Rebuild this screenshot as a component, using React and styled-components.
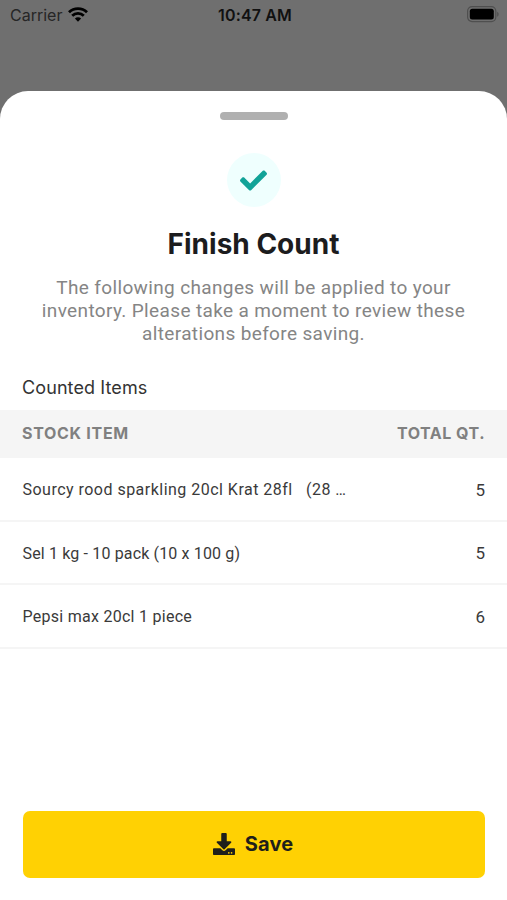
import React from "react";
import styled, { createGlobalStyle } from "styled-components";
import { FaCheck, FaDownload } from "react-icons/fa";

const items = [
  { name: "Sourcy rood sparkling 20cl Krat 28fl\u00a0\u00a0\u00a0(28 …", qty: 5, spacing: 0.48 },
  { name: "Sel 1 kg - 10 pack (10 x 100 g)", qty: 5, spacing: 0.15 },
  { name: "Pepsi max 20cl 1 piece", qty: 6, spacing: 0.27 },
];

const App = () => {
  return (
    <>
      <GlobalStyle />
      <Screen>
        <StatusBar>
          <Carrier>
            <span>Carrier</span>
            <WifiIcon />
          </Carrier>
          <Time>10:47 AM</Time>
          <BatteryIcon />
        </StatusBar>

        <Sheet>
          <Handle />
          <CheckCircle><FaCheck size={27} /></CheckCircle>
          <Title>Finish Count</Title>
          <Description>
            <span>The following changes will be applied to your</span>
            <span>inventory. Please take a moment to review these</span>
            <span>alterations before saving.</span>
          </Description>

          <SectionLabel>Counted Items</SectionLabel>
          <TableHeader>
            <HeaderCell $spacing={0.7}>STOCK ITEM</HeaderCell>
            <HeaderCell $spacing={0.5}>TOTAL QT.</HeaderCell>
          </TableHeader>
          {items.map((item) => (
            <Row key={item.name}>
              <ItemName $spacing={item.spacing}>{item.name}</ItemName>
              <Quantity>{item.qty}</Quantity>
            </Row>
          ))}

          <SaveButton><FaDownload size={22} /> Save</SaveButton>
        </Sheet>
      </Screen>
    </>
  );
};

const WifiIcon = () => (
  <svg width="20" height="15" viewBox="0 0 20 15" fill="none" stroke="#000" strokeWidth="2.8">
    <path d="M1 5.3a12.8 12.8 0 0 1 18 0" />
    <path d="M4.2 8.7a8.3 8.3 0 0 1 11.6 0" />
    <path d="M10 14.8 6.9 11.6a4.4 4.4 0 0 1 6.2 0Z" fill="#000" stroke="none" />
  </svg>
);

const BatteryIcon = () => (
  <svg width="33" height="17" viewBox="0 0 33 17">
    <rect x="0.6" y="0.6" width="28.2" height="15" rx="4.5" fill="none" stroke="#4f4f4f" strokeWidth="1.2" />
    <rect x="2.8" y="2.8" width="24" height="10.6" rx="2.5" fill="#000" />
    <path d="M30.2 5.7c1.9.7 1.9 4.3 0 5Z" fill="#4f4f4f" />
  </svg>
);

export default App;

// Styled Components
const GlobalStyle = createGlobalStyle`
  * {
    box-sizing: border-box;
  }

  body {
    margin: 0;
    background: #6f6f6f;
    font-family: Roboto, "Liberation Sans", sans-serif;
  }
`;

const Screen = styled.div`
  height: 900px;
  display: flex;
  flex-direction: column;
  background: #6f6f6f;
  overflow: hidden;
`;

const StatusBar = styled.header`
  height: 91px;
  flex-shrink: 0;
  padding: 6px 7px 0 10px;
  display: grid;
  grid-template-columns: 1fr auto 1fr;
  align-items: start;
  color: #111;
  font-family: Inter, sans-serif;
  font-size: 16px;
  line-height: 18px;

  > svg {
    justify-self: end;
  }
`;

const Carrier = styled.div`
  display: flex;
  align-items: center;
  gap: 6px;
  color: #262626;

  svg {
    margin-bottom: 2px;
  }
`;

const Time = styled.div`
  font-weight: 600;
  letter-spacing: 0.15px;
`;

const Sheet = styled.main`
  flex: 1;
  display: flex;
  flex-direction: column;
  align-items: center;
  background: #fff;
  border-radius: 28px 28px 0 0;
`;

const Handle = styled.div`
  width: 68px;
  height: 8px;
  margin-top: 21px;
  border-radius: 4px;
  background: #b0b0b0;
`;

const CheckCircle = styled.div`
  width: 54px;
  height: 54px;
  margin-top: 33px;
  display: flex;
  align-items: center;
  justify-content: center;
  border-radius: 50%;
  background: #effffe;
  color: #12a398;
`;

const Title = styled.h1`
  margin: 19px 0 0;
  color: #1c1c1e;
  font-family: Inter, sans-serif;
  font-size: 28px;
  font-weight: 700;
  line-height: 36px;
`;

const Description = styled.p`
  margin: 14px 0 0;
  display: flex;
  flex-direction: column;
  align-items: center;
  color: #858585;
  font-size: 19px;
  line-height: 23px;
  letter-spacing: 0.36px;
`;

const SectionLabel = styled.h2`
  align-self: stretch;
  margin: 31px 0 0;
  padding-left: 22px;
  color: #333;
  font-family: Inter, sans-serif;
  font-size: 18px;
  font-weight: 400;
  line-height: 24px;
  letter-spacing: 0.1px;
`;

const TableHeader = styled.div`
  align-self: stretch;
  height: 48px;
  margin-top: 10px;
  padding: 0 22px 2px;
  display: flex;
  align-items: center;
  justify-content: space-between;
  background: #f5f5f5;
  color: #808080;
  font-family: Inter, sans-serif;
  font-size: 16px;
  font-weight: 700;
`;

const HeaderCell = styled.span`
  letter-spacing: ${(props) => props.$spacing}px;
`;

const Row = styled.div`
  align-self: stretch;
  height: 63.5px;
  padding: 2px 22px 0;
  display: flex;
  align-items: center;
  justify-content: space-between;
  border-bottom: 2px solid #f5f5f5;
  color: #3a3a3a;
  font-size: 16px;
`;

const ItemName = styled.span`
  padding-left: 0.5px;
  letter-spacing: ${(props) => props.$spacing}px;
`;

const Quantity = styled.span`
  font-size: 17px;
`;

const SaveButton = styled.button`
  width: 462px;
  height: 67px;
  margin-top: auto;
  margin-bottom: 22px;
  padding: 0 1px 2px 0;
  display: flex;
  align-items: center;
  justify-content: center;
  gap: 10px;
  border: none;
  border-radius: 7px;
  background: #ffd103;
  color: #1f1f1b;
  font-family: Inter, sans-serif;
  font-size: 20px;
  font-weight: 700;
  letter-spacing: 0.2px;
`;
